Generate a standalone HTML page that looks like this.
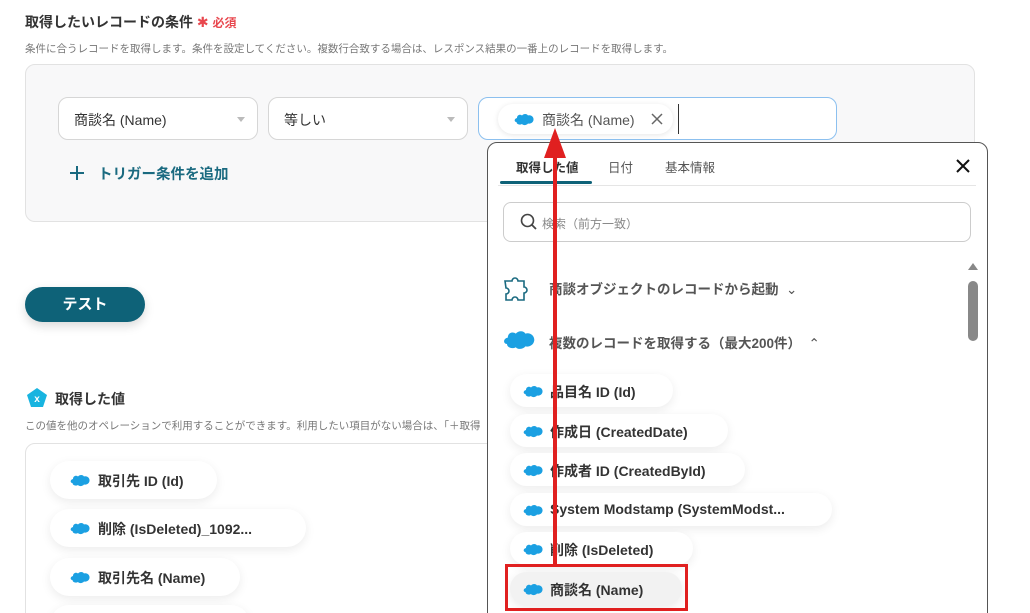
<!DOCTYPE html>
<html style="height:613px;overflow:hidden"><head><meta charset="utf-8"><style>
*{box-sizing:border-box;margin:0;padding:0}
html,body{width:1030px;height:613px;overflow:hidden}
body{background:#fff;font-family:"Liberation Sans","Noto Sans CJK JP",sans-serif;color:#333;position:relative}
.a{position:absolute}
.sel{position:absolute;top:97px;height:43px;border:1px solid #d6d6d6;border-radius:10px;background:#fff;font-size:14px;padding:12px 0 0 15px;color:#333}
.sel:after{content:"";position:absolute;right:12px;top:19px;border:4px solid transparent;border-top:5px solid #bbb}
.chip{position:absolute;height:38px;border-radius:19px;background:#fff;box-shadow:0 3px 10px rgba(0,0,0,.08);font-size:14px;font-weight:bold;color:#333;padding:10px 0 0 48px;white-space:nowrap}
.chip svg{position:absolute;left:20px;top:13px}
.pc{position:absolute;height:33px;border-radius:17px;background:#fff;box-shadow:0 3px 10px rgba(0,0,0,.08);font-size:14px;font-weight:bold;color:#333;padding:8px 0 0 40px;white-space:nowrap;left:510px}
.pc svg{position:absolute;left:13px;top:11px}
</style></head><body>
<svg width="0" height="0" style="position:absolute"><defs><symbol id="sf" viewBox="0 0 20 13"><path fill="#1ba0e2" d="M3 5C3 2 6 1 8 2.5 9.5 0.5 13 0.5 14 2.5 17 1.5 20 4 19.5 7 19 10 16 11 14 10.5 12.5 12.5 9 12.5 8 11 5.5 12.5 2.5 11 2.5 9 0 9 0 5.5 3 5Z"/></symbol></defs></svg>

<div class="a" style="left:25px;top:12px;font-size:14px;font-weight:bold;color:#333">取得したいレコードの条件 <span style="color:#e8474e;font-weight:normal">✱</span> <span style="color:#e8474e;font-size:12px">必須</span></div>
<div class="a" style="left:25px;top:41px;font-size:10.5px;color:#777">条件に合うレコードを取得します。条件を設定してください。複数行合致する場合は、レスポンス結果の一番上のレコードを取得します。</div>
<div class="a" style="left:25px;top:64px;width:950px;height:158px;border:1px solid #e2e2e2;border-radius:10px;background:#f8f8f9"></div>
<div class="sel" style="left:58px;width:200px">商談名 (Name)</div>
<div class="sel" style="left:268px;width:200px">等しい</div>
<div class="a" style="left:478px;top:97px;width:359px;height:43px;border:1px solid #8cc0ef;border-radius:10px;background:#fff"></div>
<div class="a" style="left:498px;top:104px;width:175px;height:30px;border-radius:15px;background:#fff;box-shadow:0 1px 6px rgba(0,0,0,.1);font-size:14px;color:#555;padding:6px 0 0 44px">商談名 (Name)<svg style="position:absolute;left:16px;top:9px" width="20" height="13"><use href="#sf"/></svg><svg style="position:absolute;right:10px;top:9px" width="12" height="12"><path d="M1 1 11 11M11 1 1 11" stroke="#666" stroke-width="1.5"/></svg></div>
<div class="a" style="left:678px;top:104px;width:1px;height:30px;background:#333"></div>
<svg class="a" style="left:70px;top:166px" width="14" height="14"><path d="M7 0V14M0 7H14" stroke="#1a6a80" stroke-width="2"/></svg>
<div class="a" style="left:98px;top:163px;font-size:14.5px;font-weight:bold;color:#1a6a80">トリガー条件を追加</div>

<div class="a" style="left:25px;top:287px;width:120px;height:35px;border-radius:18px;background:#0e6278;color:#fff;font-size:15px;font-weight:bold;text-align:center;line-height:35px;box-shadow:0 4px 10px rgba(0,0,0,.15)">テスト</div>

<svg class="a" style="left:26px;top:387px" width="22" height="21" viewBox="0 0 22 21"><path fill="#18b4e0" d="M11 1 21 8 17 20 5 20 1 8Z"/><text x="11" y="15" fill="#fff" font-size="10" font-weight="bold" text-anchor="middle" font-family="Liberation Sans">x</text></svg>
<div class="a" style="left:55px;top:389px;font-size:14px;font-weight:bold;color:#333">取得した値</div>
<div class="a" style="left:25px;top:418px;font-size:10.5px;color:#777;white-space:nowrap">この値を他のオペレーションで利用することができます。利用したい項目がない場合は、「＋取得</div>
<div class="a" style="left:25px;top:443px;width:480px;height:200px;border:1px solid #e2e2e2;border-radius:10px;background:#fff"></div>
<div class="chip" style="left:50px;top:461px;width:167px">取引先 ID (Id)<svg width="20" height="13"><use href="#sf"/></svg></div>
<div class="chip" style="left:50px;top:509px;width:256px">削除 (IsDeleted)_1092...<svg width="20" height="13"><use href="#sf"/></svg></div>
<div class="chip" style="left:50px;top:558px;width:190px">取引先名 (Name)<svg width="20" height="13"><use href="#sf"/></svg></div>
<div class="chip" style="left:50px;top:605px;width:200px"></div>

<div class="a" style="left:487px;top:142px;width:501px;height:500px;border:1px solid #555;border-radius:10px;background:#fff"></div>
<div class="a" style="left:516px;top:157px;font-size:12.5px;font-weight:bold;color:#333">取得した値</div>
<div class="a" style="left:608px;top:157px;font-size:12.5px;color:#555">日付</div>
<div class="a" style="left:665px;top:157px;font-size:12.5px;color:#555">基本情報</div>
<div class="a" style="left:500px;top:181px;width:92px;height:3px;background:#0e6278;border-radius:2px"></div>
<div class="a" style="left:498px;top:185px;width:478px;height:1px;background:#e5e5e5"></div>
<svg class="a" style="left:955px;top:158px" width="16" height="16"><path d="M2 2 14 14M14 2 2 14" stroke="#111" stroke-width="2"/></svg>
<div class="a" style="left:503px;top:202px;width:468px;height:40px;border:1px solid #ccc;border-radius:8px"></div>
<svg class="a" style="left:520px;top:213px" width="18" height="18"><circle cx="7.5" cy="7.5" r="6" stroke="#444" stroke-width="1.6" fill="none"/><path d="M12 12 16 16" stroke="#444" stroke-width="1.8"/></svg>
<div class="a" style="left:542px;top:215px;font-size:12px;color:#888">検索（前方一致）</div>
<svg class="a" style="left:502px;top:272px" width="32" height="32" viewBox="0 0 32 32"><path d="M3 9h7a3 3 0 0 1 6 0h6v6a3 3 0 0 1 0 6v7h-6a3 3 0 0 0-6 0H4v-6a3 3 0 0 0 0-6Z" fill="none" stroke="#1a6a80" stroke-width="1.6"/></svg>
<div class="a" style="left:549px;top:278px;font-size:13.5px;font-weight:bold;color:#555">商談オブジェクトのレコードから起動 <span style="font-weight:normal;color:#555">&nbsp;⌄</span></div>
<svg class="a" style="left:503px;top:329px" width="32" height="22"><use href="#sf"/></svg>
<div class="a" style="left:549px;top:332px;font-size:13.5px;font-weight:bold;color:#555">複数のレコードを取得する（最大200件） <span style="font-weight:normal">&nbsp;⌃</span></div>
<div class="a" style="left:968px;top:263px;border:5px solid transparent;border-bottom:7px solid #888;border-top:0;width:0"></div>
<div class="a" style="left:968px;top:281px;width:10px;height:60px;border-radius:5px;background:#888"></div>

<div class="pc" style="top:374px;width:163px">品目名 ID (Id)<svg width="20" height="13"><use href="#sf"/></svg></div>
<div class="pc" style="top:414px;width:218px">作成日 (CreatedDate)<svg width="20" height="13"><use href="#sf"/></svg></div>
<div class="pc" style="top:453px;width:235px">作成者 ID (CreatedById)<svg width="20" height="13"><use href="#sf"/></svg></div>
<div class="pc" style="top:493px;width:322px">System Modstamp (SystemModst...<svg width="20" height="13"><use href="#sf"/></svg></div>
<div class="pc" style="top:532px;width:183px">削除 (IsDeleted)<svg width="20" height="13"><use href="#sf"/></svg></div>
<div class="pc" style="top:572px;width:172px;background:#f2f2f2">商談名 (Name)<svg width="20" height="13"><use href="#sf"/></svg></div>
<div class="a" style="left:505px;top:564px;width:183px;height:47px;border:3px solid #e02020"></div>

<svg class="a" style="left:535px;top:125px" width="40" height="445"><path d="M20 30V440" stroke="#e02020" stroke-width="4"/><path d="M9 33 20 3 31 33Z" fill="#e02020"/></svg>
</body></html>
